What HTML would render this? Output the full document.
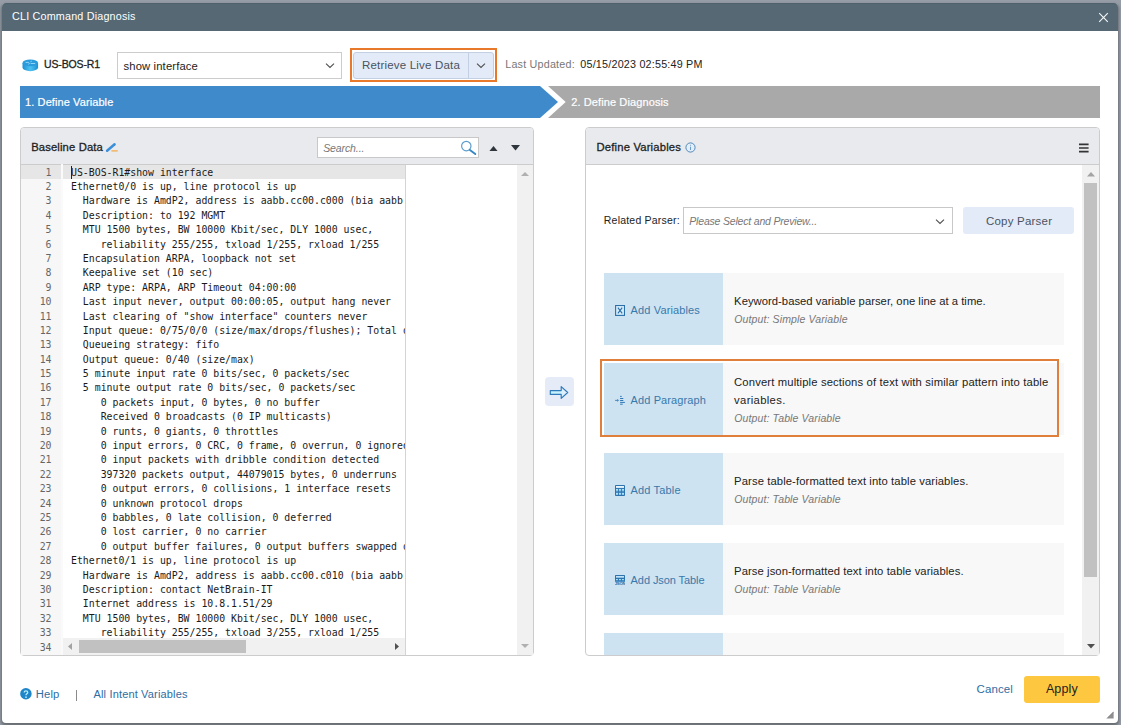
<!DOCTYPE html>
<html lang="en">
<head>
<meta charset="utf-8">
<title>CLI Command Diagnosis</title>
<style>
*{box-sizing:border-box;margin:0;padding:0}
html,body{width:1121px;height:725px;overflow:hidden}
body{position:relative;font-family:"Liberation Sans",sans-serif;font-size:12px;color:#222;
 background:#969da6}
.a{position:absolute}
#dlg{position:absolute;left:2px;top:3px;width:1116px;height:720px;background:#fff;border-radius:4px;
 box-shadow:0 2px 3px 1px rgba(0,0,0,.3)}
#title{position:absolute;left:2px;top:3px;width:1116px;height:28px;background:#556874;border-radius:4px 4px 0 0;border-top:1px solid #4f626d}
.t{position:absolute;white-space:pre;line-height:16px}
.panel{position:absolute;border:1px solid #ccc;border-radius:4px;background:#fff}
.phead{position:absolute;background:#e9eaed;border-bottom:1px solid #ccc;border-radius:3px 3px 0 0}
#gutter{position:absolute;left:21px;top:165px;width:40px;height:473px;padding-top:.6px;background:linear-gradient(#e6e6e6,#e6e6e6) 0 0/100% 14.4px no-repeat #f7f7f7;overflow:hidden}
#gutter2{position:absolute;left:21px;top:638px;width:40px;height:17px;background:#f7f7f7;overflow:hidden}
.ln{height:14.4px;line-height:14.4px;text-align:right;padding-right:9.5px;font-family:"DejaVu Sans Mono","Liberation Mono",monospace;font-size:9.85px;color:#666}
#code{position:absolute;left:63px;top:165.6px;width:342px;height:472.4px;overflow:hidden}
.cl{height:14.4px;line-height:14.4px;white-space:pre;font-family:"DejaVu Sans Mono","Liberation Mono",monospace;font-size:9.85px;color:#1a1a1a;padding-left:8px}
.card{position:absolute;left:604px;width:460px;height:72px;background:#f8f8f8}
.card i{position:absolute;left:0;top:0;width:119px;height:72px;background:#cde3f2}
</style>
</head>
<body>
<div id="dlg"></div>
<div id="title"></div>
<svg class="a" style="left:1098px;top:12px" width="11" height="11" viewBox="0 0 11 11"><path d="M1.2 1.2 L9.8 9.8 M9.8 1.2 L1.2 9.8" stroke="#f4f6f7" stroke-width="1.15" fill="none"/></svg>

<!-- toolbar -->
<svg class="a" style="left:21.5px;top:58.7px" width="17" height="13" viewBox="0 0 17 13">
  <defs><linearGradient id="rg" x1="0" x2="1" y1="0" y2="0"><stop offset="0" stop-color="#1e8fd3"/><stop offset=".5" stop-color="#4cc2f1"/><stop offset="1" stop-color="#1e8fd3"/></linearGradient></defs>
  <path d="M0.5 3.9 V8.5 A7.8 3.7 0 0 0 16.1 8.5 V3.9 Z" fill="url(#rg)"/>
  <ellipse cx="8.3" cy="3.9" rx="7.8" ry="3.4" fill="#2a9bdc"/>
  <path d="M3.6 3.4h3.3M8.6 4.5h4.6M6.2 5.3l1.6-1.1M8.4 2.9l1.4-.9" stroke="#a8e2fa" stroke-width=".8" fill="none"/>
</svg>
<div class="a" style="left:117px;top:52px;width:225px;height:27px;border:1px solid #ccc;background:#fff"></div>
<svg class="a" style="left:325px;top:62px" width="10" height="7" viewBox="0 0 10 7"><path d="M1 1.6 L5 5.5 L9 1.6" stroke="#505050" stroke-width="1.1" fill="none"/></svg>
<div class="a" style="left:350px;top:48px;width:147px;height:34px;border:2px solid #e8792b"></div>
<div class="a" style="left:353px;top:52px;width:141px;height:27px;border:1px solid #c3cfe2;background:#e3ebf8;border-radius:3px"></div>
<div class="a" style="left:468px;top:53px;width:1px;height:25px;background:#c3cfe2"></div>
<svg class="a" style="left:476px;top:62px" width="10" height="7" viewBox="0 0 10 7"><path d="M1 1.6 L5 5.5 L9 1.6" stroke="#505050" stroke-width="1.1" fill="none"/></svg>

<!-- steps -->
<svg class="a" style="left:20px;top:86px" width="1080" height="32" viewBox="0 0 1080 31.5" preserveAspectRatio="none">
  <path d="M0 0 H520 L538 15.75 L520 31.5 H0 Z" fill="#3f8acb"/>
  <path d="M528 0 H1080 V31.5 H528 L545.7 15.75 Z" fill="#a9a9a9"/>
</svg>

<!-- left panel -->
<div class="panel" style="left:20px;top:127px;width:514px;height:529px"></div>
<div class="phead" style="left:21px;top:128px;width:512px;height:37px"></div>
<svg class="a" style="left:105px;top:142px" width="14" height="11" viewBox="0 0 14 11">
  <path d="M2.1 8.7 L9.6 2.3" stroke="#3a8fdb" stroke-width="2.5" stroke-linecap="round"/>
  <path d="M6.4 8.9 H12.7" stroke="#f5a742" stroke-width="1.2"/>
</svg>
<div class="a" style="left:317px;top:137px;width:162px;height:21px;border:1px solid #c8c8c8;background:#fff"></div>
<svg class="a" style="left:459px;top:139px" width="18" height="17" viewBox="0 0 18 17">
  <circle cx="7.3" cy="7.1" r="4.7" stroke="#5b9ccb" stroke-width="1.15" fill="none"/>
  <path d="M10.9 10.9 L16.3 15.1" stroke="#3787c2" stroke-width="1.9" stroke-linecap="round"/>
</svg>
<svg class="a" style="left:489px;top:145.5px" width="9" height="5.5" viewBox="0 0 9 5.5"><path d="M0 5.5 L4.5 0 L9 5.5 Z" fill="#2f353c"/></svg>
<svg class="a" style="left:511px;top:145px" width="9" height="5.5" viewBox="0 0 9 5.5"><path d="M0 0 L4.5 5.5 L9 0 Z" fill="#2f353c"/></svg>

<div class="a" style="left:21px;top:165px;width:384px;height:14.4px;background:#e6e6e6"></div>
<div id="gutter"><div class="ln">1</div><div class="ln">2</div><div class="ln">3</div><div class="ln">4</div><div class="ln">5</div><div class="ln">6</div><div class="ln">7</div><div class="ln">8</div><div class="ln">9</div><div class="ln">10</div><div class="ln">11</div><div class="ln">12</div><div class="ln">13</div><div class="ln">14</div><div class="ln">15</div><div class="ln">16</div><div class="ln">17</div><div class="ln">18</div><div class="ln">19</div><div class="ln">20</div><div class="ln">21</div><div class="ln">22</div><div class="ln">23</div><div class="ln">24</div><div class="ln">25</div><div class="ln">26</div><div class="ln">27</div><div class="ln">28</div><div class="ln">29</div><div class="ln">30</div><div class="ln">31</div><div class="ln">32</div><div class="ln">33</div><div class="ln">34</div></div>
<div class="a" style="left:61px;top:164px;width:2px;height:474px;background:#fafafa"></div>
<div id="code"><div class="cl">US-BOS-R1#show interface</div><div class="cl">Ethernet0/0 is up, line protocol is up</div><div class="cl">  Hardware is AmdP2, address is aabb.cc00.c000 (bia aabb.cc00.c000)</div><div class="cl">  Description: to 192 MGMT</div><div class="cl">  MTU 1500 bytes, BW 10000 Kbit/sec, DLY 1000 usec,</div><div class="cl">     reliability 255/255, txload 1/255, rxload 1/255</div><div class="cl">  Encapsulation ARPA, loopback not set</div><div class="cl">  Keepalive set (10 sec)</div><div class="cl">  ARP type: ARPA, ARP Timeout 04:00:00</div><div class="cl">  Last input never, output 00:00:05, output hang never</div><div class="cl">  Last clearing of "show interface" counters never</div><div class="cl">  Input queue: 0/75/0/0 (size/max/drops/flushes); Total output drops: 0</div><div class="cl">  Queueing strategy: fifo</div><div class="cl">  Output queue: 0/40 (size/max)</div><div class="cl">  5 minute input rate 0 bits/sec, 0 packets/sec</div><div class="cl">  5 minute output rate 0 bits/sec, 0 packets/sec</div><div class="cl">     0 packets input, 0 bytes, 0 no buffer</div><div class="cl">     Received 0 broadcasts (0 IP multicasts)</div><div class="cl">     0 runts, 0 giants, 0 throttles</div><div class="cl">     0 input errors, 0 CRC, 0 frame, 0 overrun, 0 ignored</div><div class="cl">     0 input packets with dribble condition detected</div><div class="cl">     397320 packets output, 44079015 bytes, 0 underruns</div><div class="cl">     0 output errors, 0 collisions, 1 interface resets</div><div class="cl">     0 unknown protocol drops</div><div class="cl">     0 babbles, 0 late collision, 0 deferred</div><div class="cl">     0 lost carrier, 0 no carrier</div><div class="cl">     0 output buffer failures, 0 output buffers swapped out</div><div class="cl">Ethernet0/1 is up, line protocol is up</div><div class="cl">  Hardware is AmdP2, address is aabb.cc00.c010 (bia aabb.cc00.c010)</div><div class="cl">  Description: contact NetBrain-IT</div><div class="cl">  Internet address is 10.8.1.51/29</div><div class="cl">  MTU 1500 bytes, BW 10000 Kbit/sec, DLY 1000 usec,</div><div class="cl">     reliability 255/255, txload 3/255, rxload 1/255</div><div class="cl">  Encapsulation ARPA, loopback not set</div></div>
<div class="a" style="left:71px;top:165.5px;width:1px;height:13.5px;background:#222"></div>
<div class="a" style="left:405px;top:165px;width:1px;height:490px;background:#d4d4d4"></div>
<!-- h scrollbar -->
<div class="a" style="left:63px;top:638px;width:342px;height:17px;background:#f1f1f1"></div>
<div class="a" style="left:61px;top:638px;width:2px;height:17px;background:#fafafa"></div>
<div id="gutter2"><div class="ln" style="margin-top:3.2px">34</div></div>
<div class="a" style="left:79px;top:640px;width:167px;height:13px;background:#c1c1c1"></div>
<svg class="a" style="left:68px;top:643px" width="4" height="7" viewBox="0 0 4 7"><path d="M4 0 L0 3.5 L4 7 Z" fill="#a3a3a3"/></svg>
<svg class="a" style="left:395px;top:643px" width="4" height="7" viewBox="0 0 4 7"><path d="M0 0 L4 3.5 L0 7 Z" fill="#505050"/></svg>
<!-- v scrollbar -->
<div class="a" style="left:517px;top:165px;width:16px;height:490px;background:#f1f1f1"></div>
<svg class="a" style="left:520.5px;top:171.5px" width="8" height="4" viewBox="0 0 8 4"><path d="M0 4 L4 0 L8 4 Z" fill="#b0b0b0"/></svg>
<svg class="a" style="left:520.5px;top:644px" width="8" height="4" viewBox="0 0 8 4"><path d="M0 0 L4 4 L8 0 Z" fill="#b0b0b0"/></svg>

<!-- arrow -->
<div class="a" style="left:545px;top:377px;width:29px;height:28.5px;background:#e5ecf8;border-radius:4px"></div>
<svg class="a" style="left:549px;top:384.6px" width="20" height="15" viewBox="0 0 20 15">
  <defs><linearGradient id="ag" x1="0" x2="1" y1="0" y2="0"><stop offset="0" stop-color="#c4f4ff"/><stop offset=".55" stop-color="#c9f2ff"/><stop offset=".8" stop-color="#e4eefa"/></linearGradient></defs>
  <path d="M1.3 5.6 H12.2 V1.6 L18.7 7.5 L12.2 13.4 V9.4 H1.3 Z" fill="url(#ag)" stroke="#2e79b9" stroke-width="1.15" stroke-linejoin="round"/>
</svg>

<!-- right panel -->
<div class="panel" style="left:585px;top:127px;width:515px;height:529px"></div>
<div class="phead" style="left:586px;top:128px;width:513px;height:37px"></div>
<svg class="a" style="left:684.9px;top:141.8px" width="11" height="11" viewBox="0 0 11 11">
  <circle cx="5.5" cy="5.5" r="4.6" stroke="#4f88bb" stroke-width="1" fill="#e4eef8"/>
  <path d="M5.5 4.7 V8 M5.5 2.8 V3.7" stroke="#6a9cc9" stroke-width="1"/>
</svg>
<svg class="a" style="left:1079px;top:142.5px" width="10" height="10" viewBox="0 0 10 10"><path d="M0 1.3 H9.6 M0 5 H9.6 M0 8.7 H9.6" stroke="#333" stroke-width="1.7"/></svg>

<div class="a" style="left:683px;top:207px;width:270px;height:27px;border:1px solid #c8c8c8;background:#fff"></div>
<svg class="a" style="left:935px;top:218px" width="10" height="7" viewBox="0 0 10 7"><path d="M1 1.6 L5 5.5 L9 1.6" stroke="#505050" stroke-width="1.1" fill="none"/></svg>
<div class="a" style="left:963.4px;top:207px;width:110.5px;height:26.5px;background:#e3ebf8;border-radius:3px"></div>

<!-- cards -->
<div class="card" style="top:273px"><i></i></div>
<div class="card" style="top:363px"><i></i></div>
<div class="card" style="top:453px"><i></i></div>
<div class="card" style="top:543px"><i></i></div>
<div class="card" style="top:633px;height:22px"><i style="height:22px"></i></div>
<div class="a" style="left:600px;top:359px;width:459px;height:78px;border:2px solid #e07e3c"></div>
<!-- card icons -->
<svg class="a" style="left:615px;top:305px" width="10" height="11" viewBox="0 0 10 11"><rect x=".6" y=".5" width="8.9" height="9.9" fill="#d6eefc" stroke="#2b6fa8" stroke-width="1.1"/><path d="M2.9 2.7 L7.2 8.3 M7.2 2.7 L2.9 8.3" stroke="#2b6fa8" stroke-width="1.15"/></svg>
<svg class="a" style="left:614px;top:395px" width="12" height="11" viewBox="0 0 12 11"><path d="M6.1 1.4 H7.7 M6.1 3.5 H9.3 M6.1 5.5 H9.3 M6.1 7.4 H10.9 M6.1 9.2 H8.7" stroke="#2f78b5" stroke-width="1" fill="none"/><path d="M1.1 5.4 H4.3 M3.2 4.4 L4.4 5.4 L3.2 6.4" stroke="#3c7fb6" stroke-width=".9" fill="none"/></svg>
<svg class="a" style="left:615px;top:485px" width="10" height="11" viewBox="0 0 10 11"><rect x=".55" y=".55" width="8.9" height="9.8" rx=".4" fill="#3379b3" stroke="#2d73ad" stroke-width="1.1"/><rect x="1" y="1" width="8" height="1.9" fill="#e6f4fc"/><path d="M1 4.1h2v1.7H1z M3.95 4.1h2v1.7h-2z M6.9 4.1h2.1v1.7H6.9z M1 8h2v1.8H1z M3.95 8h2v1.8h-2z M6.9 8h2.1v1.8H6.9z" fill="#a9e4fe"/><path d="M1 6.3h2v1.2H1z M3.95 6.3h2v1.2h-2z M6.9 6.3h2.1v1.2H6.9z" fill="#5d9bcb"/></svg>
<svg class="a" style="left:615px;top:575px" width="10" height="11" viewBox="0 0 10 11"><path d="M0 0.5 Q0 0 .5 0 H9.5 Q10 0 10 .5 V7 H0 Z" fill="#2d73ad"/><rect x="1" y="1" width="8" height="1.7" fill="#bfe3f8"/><path d="M1 4.1h1.9v1.1H1z M4 4.1h1.9v1.1H4z M6.9 4.1h2v1.1h-2z" fill="#a5e2fd"/><rect x="0" y="5.7" width="10" height="1.4" fill="#4a90c6"/><text x="5" y="10.2" text-anchor="middle" font-family="Liberation Sans, sans-serif" font-weight="bold" font-size="4.3" letter-spacing="-.25" fill="#2a6ea8">JSON</text></svg>

<!-- right v scrollbar -->
<div class="a" style="left:1082px;top:165px;width:17px;height:490px;background:#f1f1f1"></div>
<div class="a" style="left:1084px;top:182.5px;width:13px;height:394px;background:#c1c1c1"></div>
<svg class="a" style="left:1086.5px;top:172px" width="8" height="4.5" viewBox="0 0 8 4.5"><path d="M0 4.5 L4 0 L8 4.5 Z" fill="#a3a3a3"/></svg>
<svg class="a" style="left:1086.5px;top:644px" width="8" height="4.5" viewBox="0 0 8 4.5"><path d="M0 0 L4 4.5 L8 0 Z" fill="#505050"/></svg>

<!-- footer -->
<svg class="a" style="left:20px;top:688px" width="12" height="12" viewBox="0 0 12 12"><circle cx="5.9" cy="5.8" r="5.75" fill="#1f85c8"/><path d="M4.2 4.4 C4.2 2.3 7.7 2.3 7.7 4.4 C7.7 5.8 6 5.8 6 7.3" stroke="#b4ebff" stroke-width="1.4" fill="none"/><circle cx="6" cy="9.2" r=".85" fill="#b4ebff"/></svg>
<div class="a" style="left:76px;top:690px;width:1px;height:11px;background:#8a8a8a"></div>
<div class="a" style="left:1024px;top:676px;width:76px;height:27px;background:#fdc73f;border-radius:3px"></div>
<svg class="a" style="left:1106px;top:711px" width="8" height="8" viewBox="0 0 8 8"><path d="M7.6 0.8 V7.4 H1 Z" fill="#8f8f8f"/><path d="M7.6 .8 L1 7.4" stroke="#6d6d6d" stroke-width=".8"/></svg>

<div class="t" style="left:12.0px;top:8px;font-size:10.75px;color:#fff;letter-spacing:0.20px;">CLI Command Diagnosis</div>
<div class="t" style="left:44.0px;top:56px;font-size:10.5px;color:#1e1e1e;letter-spacing:-0.14px;-webkit-text-stroke:.3px">US-BOS-R1</div>
<div class="t" style="left:123.5px;top:58px;font-size:11.25px;color:#222;letter-spacing:0.14px;">show interface</div>
<div class="t" style="left:362.0px;top:57px;font-size:11.5px;color:#4a5360;letter-spacing:0.19px;">Retrieve Live Data</div>
<div class="t" style="left:505.2px;top:56px;font-size:10.75px;color:#777;letter-spacing:0.21px;">Last Updated:</div>
<div class="t" style="left:580.3px;top:56px;font-size:10.75px;color:#222;letter-spacing:0.21px;">05/15/2023 02:55:49 PM</div>
<div class="t" style="left:25.1px;top:94px;font-size:11.0px;color:#fff;letter-spacing:0.09px;-webkit-text-stroke:.2px">1. Define Variable</div>
<div class="t" style="left:571.2px;top:94px;font-size:11.0px;color:#fff;letter-spacing:0.11px;-webkit-text-stroke:.2px">2. Define Diagnosis</div>
<div class="t" style="left:31.2px;top:139px;font-size:11.25px;color:#1e1e1e;letter-spacing:0.13px;-webkit-text-stroke:.3px">Baseline Data</div>
<div class="t" style="left:323.2px;top:140px;font-size:10.5px;color:#777;letter-spacing:-0.10px;font-style:italic">Search...</div>
<div class="t" style="left:596.5px;top:139px;font-size:11.25px;color:#1e1e1e;letter-spacing:0.18px;-webkit-text-stroke:.3px">Define Variables</div>
<div class="t" style="left:603.8px;top:212px;font-size:10.5px;color:#222;letter-spacing:0.21px;">Related Parser:</div>
<div class="t" style="left:689.3px;top:213px;font-size:10.5px;color:#777;letter-spacing:-0.19px;font-style:italic">Please Select and Preview...</div>
<div class="t" style="left:985.9px;top:213px;font-size:11.5px;color:#4a5360;letter-spacing:0.22px;">Copy Parser</div>
<div class="t" style="left:630.6px;top:302px;font-size:11.0px;color:#3a78aa;letter-spacing:0.13px;">Add Variables</div>
<div class="t" style="left:734.1px;top:293px;font-size:11.25px;color:#222;letter-spacing:0.03px;">Keyword-based variable parser, one line at a time.</div>
<div class="t" style="left:734.2px;top:311px;font-size:10.5px;color:#777;letter-spacing:0.13px;font-style:italic">Output: Simple Variable</div>
<div class="t" style="left:630.6px;top:392px;font-size:11.0px;color:#3a78aa;letter-spacing:0.11px;">Add Paragraph</div>
<div class="t" style="left:734.1px;top:374px;font-size:11.25px;color:#222;letter-spacing:0.14px;">Convert multiple sections of text with similar pattern into table</div>
<div class="t" style="left:734.1px;top:392px;font-size:11.25px;color:#222;letter-spacing:0.34px;">variables.</div>
<div class="t" style="left:734.2px;top:410px;font-size:10.5px;color:#777;letter-spacing:0.13px;font-style:italic">Output: Table Variable</div>
<div class="t" style="left:630.6px;top:482px;font-size:11.0px;color:#3a78aa;letter-spacing:0.15px;">Add Table</div>
<div class="t" style="left:734.1px;top:473px;font-size:11.25px;color:#222;letter-spacing:0.10px;">Parse table-formatted text into table variables.</div>
<div class="t" style="left:734.2px;top:491px;font-size:10.5px;color:#777;letter-spacing:0.13px;font-style:italic">Output: Table Variable</div>
<div class="t" style="left:630.6px;top:572px;font-size:11.0px;color:#3a78aa;letter-spacing:-0.08px;">Add Json Table</div>
<div class="t" style="left:734.1px;top:563px;font-size:11.25px;color:#222;letter-spacing:0.08px;">Parse json-formatted text into table variables.</div>
<div class="t" style="left:734.2px;top:581px;font-size:10.5px;color:#777;letter-spacing:0.13px;font-style:italic">Output: Table Variable</div>
<div class="t" style="left:35.8px;top:686px;font-size:11.25px;color:#2f6da3;letter-spacing:0.12px;">Help</div>
<div class="t" style="left:93.5px;top:686px;font-size:11.0px;color:#2f6da3;letter-spacing:0.16px;">All Intent Variables</div>
<div class="t" style="left:976.5px;top:681px;font-size:11.5px;color:#2f6da3;letter-spacing:0.12px;">Cancel</div>
<div class="t" style="left:1045.9px;top:681px;font-size:12.5px;color:#222;letter-spacing:0.13px;">Apply</div>
</body>
</html>
